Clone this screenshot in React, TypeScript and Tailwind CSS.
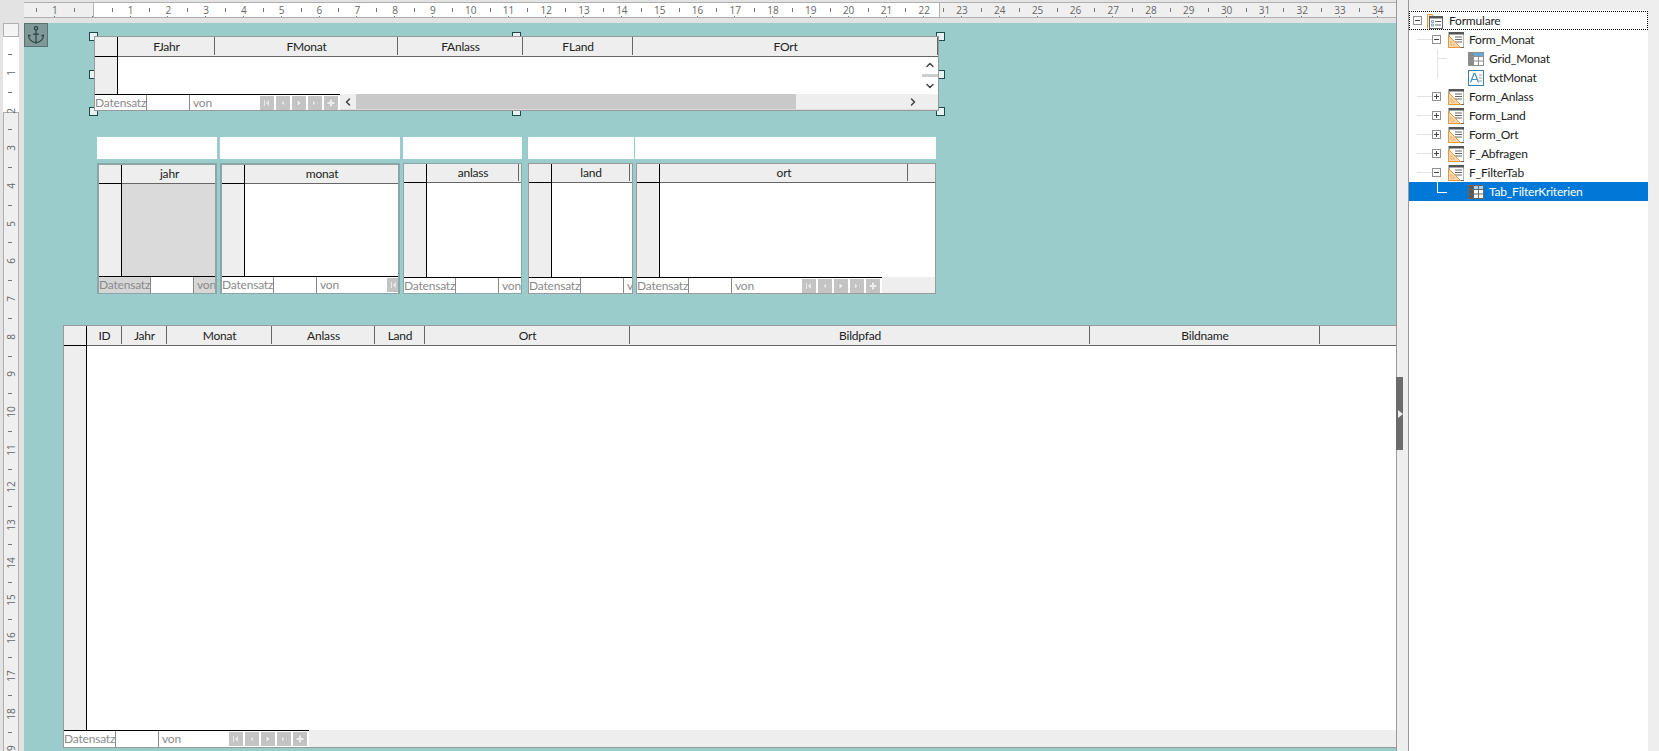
import React from "react";
import { Anchor, ChevronUp, ChevronDown, ChevronLeft, ChevronRight } from "lucide-react";

const ruleNumbersTop = ["1", "", ...Array.from({ length: 34 }, (_, i) => String(i + 1))];
const ruleNumbersLeft = Array.from({ length: 19 }, (_, i) => String(i + 1));

function TopRuler() {
  return (
    <div className="h-[23px] shrink-0 bg-[#e3e3e3] pl-[24px] pt-[2px]">
      <div className="relative h-[16px] overflow-hidden border-y border-[#b0b0b0] bg-[#efefef]">
        <div className="absolute inset-y-0 left-[69px] w-[846px] bg-white" />
        <div className="absolute inset-y-0 left-[69px] w-px bg-[#b0b0b0]" />
        <div className="absolute inset-y-0 left-[915px] w-px bg-[#b0b0b0]" />
        <div className="relative flex pl-[12px]">
          {ruleNumbersTop.map((n, i) => (
            <div key={i} className="relative flex h-[14px] w-[37.8px] shrink-0 items-center justify-center font-['Open_Sans',sans-serif] text-[10px] leading-none text-[#666]">
              <span className="absolute left-0 top-[5px] h-[4px] w-px bg-[#777]" />
              {n}
              <span className="absolute bottom-0 left-[18px] h-px w-px bg-[#777]" />
            </div>
          ))}
        </div>
      </div>
    </div>
  );
}

function LeftRuler() {
  return (
    <div className="flex w-[24px] shrink-0 flex-col bg-[#e3e3e3] pl-[3px] pr-[5px]">
      <div className="h-[14px] shrink-0 border border-[#b0b0b0] bg-[#f4f4f4]" />
      <div className="relative min-h-0 flex-1 overflow-hidden bg-[#efefef]">
        <div className="absolute inset-x-0 top-0 h-[75px] bg-white" />
        <div className="absolute inset-y-0 left-0 top-[75px] w-px bg-[#b0b0b0]" />
        <div className="absolute inset-y-0 right-0 top-[75px] w-px bg-[#b0b0b0]" />
        <div className="absolute inset-x-0 top-[75px] h-px bg-[#b0b0b0]" />
        <div className="relative flex flex-col pt-[17px]">
          {ruleNumbersLeft.map((n) => (
            <div key={n} className="relative flex h-[37.7px] w-full shrink-0 items-center justify-center font-['Open_Sans',sans-serif] text-[10px] leading-none text-[#666]">
              <span className="absolute left-[5px] top-0 h-px w-[4px] bg-[#777]" />
              <span className="-rotate-90">{n}</span>
            </div>
          ))}
        </div>
      </div>
    </div>
  );
}

function NavGlyph({ kind }: { kind: number }) {
  return (
    <div className="flex h-[14px] w-[14px] items-center justify-center bg-[#c4c4c4]">
      <svg width="10" height="10" viewBox="0 0 10 10">
        {kind === 0 && <path d="M2 2h1v6H2zM7 2v6L4 5z" fill="#e9e9e9" />}
        {kind === 1 && <path d="M6 3v4L3.500 5z" fill="#e9e9e9" />}
        {kind === 2 && <path d="M3 1.500v7L7.500 5z" fill="#ececec" stroke="#999" strokeWidth=".4" />}
        {kind === 3 && <path d="M2.500 2v6L6 5zM7 2h1v6H7z" fill="#e9e9e9" stroke="#999" strokeWidth=".3" />}
        {kind === 4 && <path d="M3.500 1h3v2.500H9v3H6.500V9h-3V6.500H1v-3h2.500z" fill="#ececec" stroke="#999" strokeWidth=".4" />}
      </svg>
    </div>
  );
}

function NavBar({ heightClass = "h-[17px]", selected = false }: { heightClass?: string; selected?: boolean }) {
  return (
    <div className={`flex w-[245px] shrink-0 overflow-hidden border-t border-black bg-white text-[12px] leading-none tracking-[-0.2px] text-[#8a8a8a] ${heightClass}`}>
      <div className={`flex w-[52px] shrink-0 items-center overflow-hidden border-r border-[#888] ${selected ? "bg-[#d6d6d6]" : ""}`}>Datensatz</div>
      <div className="w-[43px] shrink-0 border-r border-[#888]" />
      <div className={`flex w-[70px] shrink-0 items-center pl-[3px] ${selected ? "bg-[#d6d6d6]" : ""}`}>von</div>
      <div className="flex w-[80px] shrink-0 items-center gap-[2px]">
        {[0, 1, 2, 3, 4].map((k) => (
          <NavGlyph key={k} kind={k} />
        ))}
      </div>
    </div>
  );
}

type Col = { label: string; cls: string };

function DataGrid({
  frame,
  cols,
  headerClass = "h-[20px]",
  cellClass = "h-[18px]",
  navHeight = "h-[17px]",
  selected = false,
  bodyRight,
  navRight,
}: {
  frame: string;
  cols: Col[];
  headerClass?: string;
  cellClass?: string;
  navHeight?: string;
  selected?: boolean;
  bodyRight?: React.ReactNode;
  navRight?: React.ReactNode;
}) {
  return (
    <div className={`relative flex shrink-0 flex-col overflow-hidden bg-white ${frame}`}>
      <div className={`flex shrink-0 bg-[#eeeeee] ${headerClass}`}>
        <div className="w-[23px] shrink-0 border-b border-r border-black" />
        <div className="flex min-w-0 flex-1 items-start border-b border-[#666]">
          {cols.map((c) => (
            <div key={c.label} className={`flex shrink-0 items-center justify-center border-r border-[#666] pl-px pt-px text-[12px] leading-none tracking-[-0.2px] text-[#222] ${cellClass} ${c.cls}`}>
              {c.label}
            </div>
          ))}
        </div>
      </div>
      <div className="flex min-h-0 flex-1">
        <div className="w-[23px] shrink-0 border-r border-black bg-[#eeeeee]" />
        <div className={`flex-1 ${selected ? "bg-[#dadada]" : "bg-white"}`} />
        {bodyRight}
      </div>
      <div className="flex shrink-0 bg-[#eeeeee]">
        <NavBar heightClass={navHeight} selected={selected} />
        {navRight}
      </div>
    </div>
  );
}

function Handle({ cls }: { cls: string }) {
  return <div className={`absolute h-[9px] w-[9px] border border-[#1f4a4a] bg-[#e8f2f2] ${cls}`} />;
}

function PlusMinus({ open }: { open: boolean }) {
  return (
    <div className="relative h-[9px] w-[9px] shrink-0 border border-[#909090] bg-white">
      <span className="absolute left-px top-[3px] h-px w-[5px] bg-[#444]" />
      {!open && <span className="absolute left-[3px] top-px h-[5px] w-px bg-[#444]" />}
    </div>
  );
}

function FormIcon() {
  return (
    <svg width="16" height="16" viewBox="0 0 16 16" className="shrink-0">
      <rect x="1" y="0.500" width="15" height="15" fill="#fff" stroke="#6b6b6b" strokeWidth="1" />
      <rect x="1" y="0" width="15" height="2.500" fill="#555" />
      <path d="M7 5h7M7 7.500h7M7 10h7" stroke="#666" strokeWidth="1" />
      <path d="M0.500 3.500v12h12z" fill="#f7d9b2" stroke="#e39a3f" strokeWidth="1" />
      <path d="M3 9.500v3.500h3.500z" fill="#fff" stroke="#e39a3f" strokeWidth=".8" />
    </svg>
  );
}

function FolderFormIcon() {
  return (
    <svg width="16" height="16" viewBox="0 0 16 16" className="shrink-0">
      <path d="M0.500 15.500V1.500h5l1 2" fill="#fbe8cc" stroke="#e39a3f" strokeWidth="1" />
      <rect x="2.500" y="3.500" width="13" height="12" fill="#fff" stroke="#666" strokeWidth="1" />
      <rect x="2" y="3" width="14" height="2.500" fill="#555" />
      <path d="M4.500 7.500h2v2h-2zM4.500 11h2v2h-2z" fill="none" stroke="#6c9ab8" strokeWidth=".9" />
      <path d="M8 8.500h6M8 12h6" stroke="#666" strokeWidth="1" />
    </svg>
  );
}

function GridIcon({ selected = false }: { selected?: boolean }) {
  const line = selected ? "#666" : "#8f8f8f";
  return (
    <svg width="16" height="14" viewBox="0 0 16 14" className="shrink-0">
      <rect x="0" y="0" width="16" height="14" fill="#fff" />
      <rect x="0" y="0" width="5" height="14" fill={selected ? "#5a5a5a" : "#8a8a8a"} />
      <rect x="5" y="0" width="11" height="4" fill={selected ? "#a9d3f5" : "#62abe3"} />
      <path d="M5.500 0v14M10.500 0v14M0 4.500h16M0 9h16" stroke={line} strokeWidth="1" />
      <rect x="0.500" y="0.500" width="15" height="13" fill="none" stroke={line} strokeWidth="1" />
    </svg>
  );
}

function TextIcon() {
  return (
    <svg width="16" height="16" viewBox="0 0 16 16" className="shrink-0">
      <rect x="0.500" y="0.500" width="15" height="15" fill="#fff" stroke="#3f7ea8" strokeWidth="1" />
      <path d="M2.500 12.500 6 3.500h1l3.500 9M4 9.500h5" fill="none" stroke="#3f8fc4" strokeWidth="1.200" />
      <path d="M11 5h3M11 8h3M11 11h3" stroke="#9a9a9a" strokeWidth="1" />
    </svg>
  );
}

function TreeRow({
  label,
  pad,
  icon,
  open,
  textGap,
  iconGap,
  selected = false,
  dotted = false,
  line = true,
}: {
  label: string;
  pad: string;
  icon: React.ReactNode;
  open?: boolean;
  textGap: string;
  iconGap?: string;
  selected?: boolean;
  dotted?: boolean;
  line?: boolean;
}) {
  return (
    <div
      className={`relative flex h-[19px] items-center text-[12px] leading-none tracking-[-0.2px] ${pad} ${
        selected ? "bg-[#0078d7] text-white" : "text-[#222]"
      } ${dotted ? "border border-dotted border-black" : ""}`}
    >
      {line && open !== undefined && <span className="absolute left-[8px] top-[9px] h-px w-[15px] bg-[#e3e3e3]" />}
      {open !== undefined && <PlusMinus open={open} />}
      <div className={`flex w-[16px] shrink-0 items-center justify-center ${iconGap ?? ""}`}>{icon}</div>
      <span className={textGap}>{label}</span>
    </div>
  );
}

function Tree() {
  return (
    <div className="min-w-0 flex-1 pr-[11px] pt-[10px]">
      <div className="h-full bg-white pt-px">
        <TreeRow label="Formulare" pad="pl-[3px]" icon={<FolderFormIcon />} open={true} iconGap="ml-[5px]" textGap="ml-[6px]" dotted line={false} />
        <TreeRow label="Form_Monat" pad="pl-[23px]" icon={<FormIcon />} open={true} iconGap="ml-[7px]" textGap="ml-[5px]" />
        <div className="relative">
          <span className="absolute left-[28px] top-0 h-[29px] w-px bg-[#e3e3e3]" />
          <span className="absolute left-[28px] top-[9px] h-px w-[10px] bg-[#e3e3e3]" />
          <TreeRow label="Grid_Monat" pad="pl-[59px]" icon={<GridIcon />} textGap="ml-[5px]" />
          <TreeRow label="txtMonat" pad="pl-[59px]" icon={<TextIcon />} textGap="ml-[5px]" />
        </div>
        <TreeRow label="Form_Anlass" pad="pl-[23px]" icon={<FormIcon />} open={false} iconGap="ml-[7px]" textGap="ml-[5px]" />
        <TreeRow label="Form_Land" pad="pl-[23px]" icon={<FormIcon />} open={false} iconGap="ml-[7px]" textGap="ml-[5px]" />
        <TreeRow label="Form_Ort" pad="pl-[23px]" icon={<FormIcon />} open={false} iconGap="ml-[7px]" textGap="ml-[5px]" />
        <TreeRow label="F_Abfragen" pad="pl-[23px]" icon={<FormIcon />} open={false} iconGap="ml-[7px]" textGap="ml-[5px]" />
        <TreeRow label="F_FilterTab" pad="pl-[23px]" icon={<FormIcon />} open={true} iconGap="ml-[7px]" textGap="ml-[5px]" />
        <div className="relative">
          <span className="absolute left-[28px] top-0 z-10 h-[10px] w-px bg-white" />
          <span className="absolute left-[28px] top-[10px] z-10 h-px w-[10px] bg-white" />
          <TreeRow label="Tab_FilterKriterien" pad="pl-[59px]" icon={<GridIcon selected />} textGap="ml-[5px]" selected />
        </div>
      </div>
    </div>
  );
}

function Sash() {
  return (
    <div className="relative w-[13px] shrink-0 border-x border-[#999] bg-[#eeeeee]">
      <div className="absolute left-[-1px] top-[377px] flex h-[73px] w-[7px] items-center justify-end bg-[#6b6b6b]">
        <svg width="5" height="8" viewBox="0 0 5 8">
          <path d="M0 0l5 4-5 4z" fill="#eeeeee" />
        </svg>
      </div>
    </div>
  );
}

function FormCanvas() {
  const frame = "border-2 border-b border-[#8aa6a6]";
  const thin = "border border-[#8aa6a6]";
  const gray = "border border-[#9a9a9a]";
  return (
    <div className="relative min-w-0 flex-1 overflow-hidden bg-[#9bcccc]">
      <div className="absolute left-0 top-0 flex h-[24px] w-[24px] items-center justify-center border border-[#5c7070] bg-[#7f9999]">
        <Anchor size={20} strokeWidth={1.400} color="#2c4040" />
      </div>

      <div className="relative ml-[70px] mt-[13px] h-[75px] w-[845px]">
        <Handle cls="-left-[5px] -top-[4px]" />
        <Handle cls="left-[418px] -top-[4px]" />
        <Handle cls="left-[842px] -top-[4px]" />
        <Handle cls="-left-[5px] top-[34px]" />
        <Handle cls="left-[842px] top-[34px]" />
        <Handle cls="-left-[5px] top-[71px]" />
        <Handle cls="left-[418px] top-[71px]" />
        <Handle cls="left-[842px] top-[71px]" />
        <DataGrid
          frame="h-[75px] w-[845px] border border-[#999]"
          navHeight="h-[16px]"
          cols={[
            { label: "FJahr", cls: "w-[97px]" },
            { label: "FMonat", cls: "w-[183px]" },
            { label: "FAnlass", cls: "w-[125px]" },
            { label: "FLand", cls: "w-[110px]" },
            { label: "FOrt", cls: "w-[305px]" },
          ]}
          bodyRight={
            <div className="flex w-[16px] shrink-0 flex-col items-center justify-between bg-white py-[2px] text-[#444]">
              <ChevronUp size={12} strokeWidth={3} />
              <div className="h-[3px] w-full bg-[#cdcdcd]" />
              <ChevronDown size={12} strokeWidth={3} />
            </div>
          }
          navRight={
            <div className="flex min-w-0 flex-1 items-center border-b border-[#ddd] text-[#444]">
              <div className="flex h-full w-[16px] shrink-0 items-center justify-center bg-[#eeeeee]">
                <ChevronLeft size={12} strokeWidth={3} />
              </div>
              <div className="h-full w-[440px] shrink-0 bg-[#c9c9c9]" />
              <div className="flex h-full flex-1 items-center justify-end bg-[#eeeeee] pr-[19px]">
                <ChevronRight size={12} strokeWidth={3} />
              </div>
            </div>
          }
        />
      </div>

      <div className="ml-[73px] mt-[26px] flex h-[22px]">
        <div className="w-[120px] bg-white" />
        <div className="ml-[3px] w-[180px] bg-white" />
        <div className="ml-[3px] w-[119px] bg-white" />
        <div className="ml-[6px] w-[106px] bg-white" />
        <div className="ml-px w-[301px] bg-white" />
      </div>

      <div className="ml-[73px] mt-[4px] flex">
        <DataGrid frame={`h-[131px] w-[120px] ${frame}`} headerClass="h-[19px]" cellClass="h-[17px]" selected cols={[{ label: "jahr", cls: "w-[94px] border-r-0" }]} />
        <DataGrid frame={`ml-[3px] h-[131px] w-[180px] ${frame}`} headerClass="h-[19px]" cellClass="h-[17px]" cols={[{ label: "monat", cls: "w-[154px]" }]} />
        <DataGrid frame={`ml-[3px] h-[131px] w-[119px] ${thin}`} headerClass="h-[19px]" cellClass="h-[17px]" navHeight="h-[16px]" cols={[{ label: "anlass", cls: "w-[92px]" }]} />
        <DataGrid frame={`ml-[6px] h-[131px] w-[105px] ${gray}`} headerClass="h-[19px]" cellClass="h-[17px]" navHeight="h-[16px]" cols={[{ label: "land", cls: "w-[78px]" }]} />
        <DataGrid frame={`ml-[3px] h-[131px] w-[300px] ${gray}`} headerClass="h-[19px]" cellClass="h-[17px]" navHeight="h-[16px]" cols={[{ label: "ort", cls: "w-[248px]" }]} />
      </div>

      <div className="ml-[39px] mt-[31px]">
        <DataGrid
          frame="h-[423px] w-[1335px] border border-[#999]"
          cols={[
            { label: "ID", cls: "w-[35px]" },
            { label: "Jahr", cls: "w-[45px]" },
            { label: "Monat", cls: "w-[105px]" },
            { label: "Anlass", cls: "w-[103px]" },
            { label: "Land", cls: "w-[50px]" },
            { label: "Ort", cls: "w-[205px]" },
            { label: "Bildpfad", cls: "w-[460px]" },
            { label: "Bildname", cls: "w-[230px]" },
          ]}
        />
      </div>
    </div>
  );
}

export default function App() {
  return (
    <div className="flex h-[751px] w-[1659px] overflow-hidden bg-[#eeeeee] font-['Lato','Open_Sans',sans-serif]">
      <div className="flex w-[1396px] shrink-0 flex-col">
        <TopRuler />
        <div className="flex min-h-0 flex-1">
          <LeftRuler />
          <FormCanvas />
        </div>
      </div>
      <Sash />
      <Tree />
    </div>
  );
}
